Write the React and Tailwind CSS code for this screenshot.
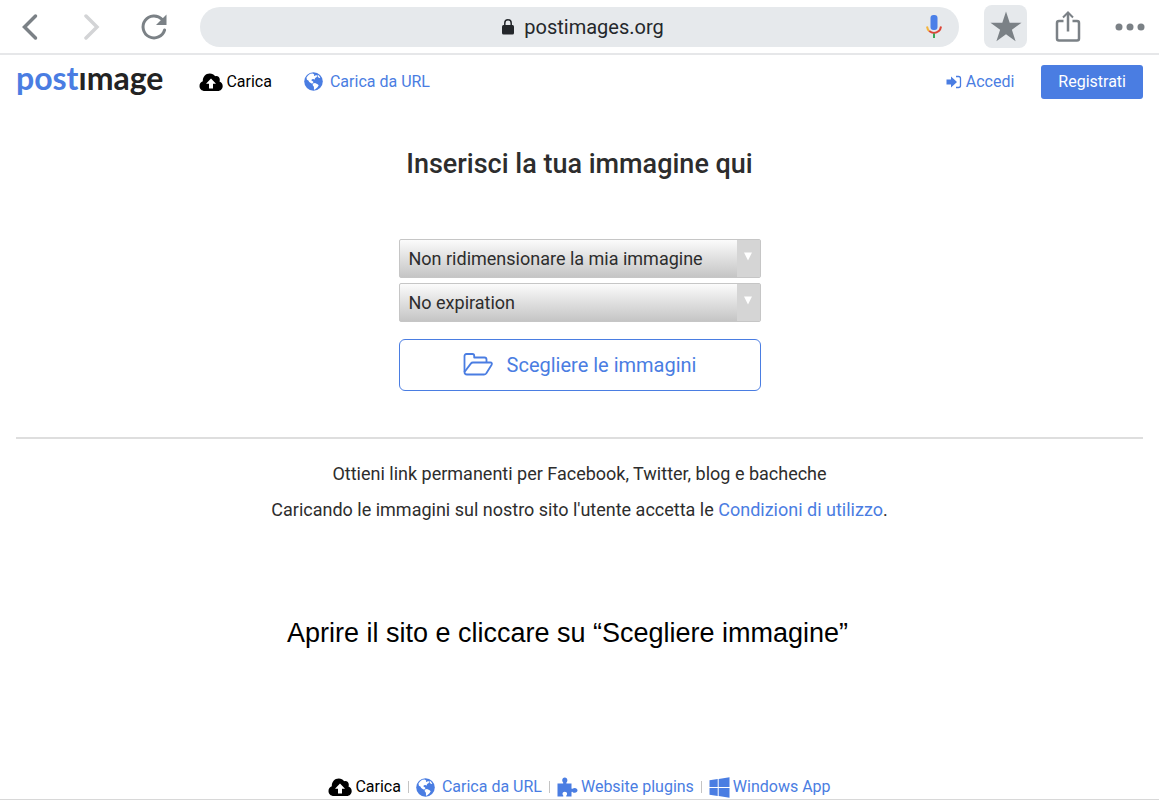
const resizeOptions = ["Non ridimensionare la mia immagine", "320x240", "640x480", "800x600"];
const expirationOptions = ["No expiration", "1 giorno", "7 giorni", "31 giorni"];

function MicIcon() {
  return (
    <svg width="18" height="26" viewBox="0 0 18 26" fill="none">
      <rect x="5.5" y="1" width="7" height="15" rx="3" fill="#4a7fe8" />
      <path d="M2 12.500c.3 2 .9 3.300 2.200 4.600" stroke="#f4b43c" strokeWidth="2" />
      <path d="M4.200 17.100c2.800 2.400 6.800 2.400 9.600 0 1.300-1.300 1.900-2.600 2.200-4.600" stroke="#dc4638" strokeWidth="2" />
      <path d="M9 19.500v4.500" stroke="#3aa757" strokeWidth="2" />
    </svg>
  );
}

function CloudIcon() {
  return (
    <svg width="24" height="18" viewBox="0 0 24 18">
      <path
        d="M6 18C2.500 18 .5 15.800.5 13c0-2.300 1.300-4 3.300-4.700C3.600 4 6.500.5 10.800.5c2.300 0 4.100 1 5.300 2.700 2.500-.7 4.800.9 4.700 3.600 0 .6-.1 1.200-.3 1.700 2 .6 3.200 2.300 3.200 4.500 0 2.800-2 5-4.900 5z"
        fill="currentColor"
      />
      <path d="M12 5.500l5 5.300h-3v4.700h-4v-4.700H7z" fill="#fff" />
    </svg>
  );
}

function GlobeIcon() {
  return (
    <svg width="19" height="19" viewBox="0 0 19 19">
      <circle cx="9.500" cy="9.500" r="9.300" fill="currentColor" />
      <path
        d="M6.200 1.800 4 3.500 2.500 5.500l.4 2.300 1.500.6.800 1.600 2.300 1.500 1.600-.2.200-1.600-1-.8-.8-.2.300-1.500 1.700-.2.900.8.800-1.800 1.600-1.100.3-1.300-1.500-.6-.4 1-1.200-.3.200-1.300-1.500-.8z"
        fill="#fff"
      />
      <path d="M13.600 2.800l1.500 1 1.200 2-1.100.2-1.500-1.300z" fill="#fff" />
      <path d="M9 11.500l2-.5 2.600 1.300 1.100.9-1.200 2.100-2.500 2.200-1 .2-.1-3-1.300-1.600z" fill="#fff" />
    </svg>
  );
}

function PuzzleIcon() {
  return (
    <svg width="21" height="20" viewBox="0 0 21 20" fill="currentColor">
      <path d="M.5 6.500h5.200c.6 0 .7-.5.400-1C5.600 4.800 5.200 4.100 5.200 3.300 5.200 1.700 6.300.5 7.800.5s2.600 1.200 2.600 2.800c0 .8-.4 1.500-.9 2.200-.3.500-.2 1 .4 1h4.600v4.700c0 .7.500.8 1 .5.700-.5 1.400-.8 2.200-.8 1.600 0 2.800 1 2.800 2.400s-1.200 2.500-2.800 2.500c-.8 0-1.500-.4-2.200-.9-.5-.3-1-.2-1 .4v4.200H9.800c-.6 0-.7-.5-.4-1 .4-.5.700-1 .7-1.700 0-1.200-1-2-2.300-2s-2.300.8-2.300 2c0 .7.300 1.200.7 1.700.3.500.2 1-.4 1H.5z" />
    </svg>
  );
}

function WindowsIcon() {
  return (
    <svg width="21" height="21" viewBox="0 0 21 21" fill="currentColor">
      <path d="M.5 3.200 8.700 2v8H.5zM9.700 1.900 20.500.300V10H9.700zM.5 11h8.200v8L.5 17.800zM9.700 11h10.800v9.700L9.700 19.100z" />
    </svg>
  );
}

function BrowserBar() {
  return (
    <div className="flex h-[55px] items-center border-b-2 border-[#e6e7e9] pr-[13px] pl-5 text-[#7b8186]">
      <button aria-label="Indietro" className="flex w-5 justify-center">
        <svg width="16" height="28" viewBox="0 0 16 28" fill="none" stroke="currentColor" strokeWidth="3.500" strokeLinecap="round">
          <path d="M13.500 3 2.500 14l11 11" />
        </svg>
      </button>
      <button aria-label="Avanti" className="ml-10 flex w-6 justify-center text-[#d3d4d6]">
        <svg width="16" height="28" viewBox="0 0 16 28" fill="none" stroke="currentColor" strokeWidth="3.500" strokeLinecap="round">
          <path d="M2 3l11 11L2 25" />
        </svg>
      </button>
      <button aria-label="Ricarica" className="ml-9">
        <svg width="28" height="28" viewBox="0 0 28 28" fill="none">
          <path d="M22 6.300A11 11 0 1 0 24.600 17" stroke="currentColor" strokeWidth="3" strokeLinecap="round" />
          <path d="M26.500 1.500V12H16z" fill="currentColor" />
        </svg>
      </button>
      <div className="ml-8 flex h-10 flex-1 items-center rounded-full bg-[#e6e9ec] pr-4 pl-10">
        <div className="flex flex-1 items-center justify-center gap-[9px] text-[#24272b]">
          <svg width="14" height="18" viewBox="0 0 14 18" fill="none">
            <rect x="1" y="7" width="12" height="9.500" rx="1.500" fill="currentColor" />
            <path d="M3.800 7.500V5a3.200 3.200 0 0 1 6.400 0v2.500" stroke="currentColor" strokeWidth="1.500" />
          </svg>
          <span className="font-[Roboto,sans-serif] text-xl leading-6">postimages.org</span>
        </div>
        <button aria-label="Ricerca vocale">
          <MicIcon />
        </button>
      </div>
      <button aria-label="Preferiti" className="ml-[25px] flex size-[43px] items-center justify-center rounded-lg bg-[#e6e9ec]">
        <svg width="32" height="31" viewBox="0 0 32 31" fill="currentColor">
          <path d="M16 .5l3.700 11.300h11.800l-9.600 7 3.700 11.400L16 23.200l-9.600 7 3.700-11.400-9.600-7h11.800z" />
        </svg>
      </button>
      <button aria-label="Condividi" className="ml-7">
        <svg width="26" height="32" viewBox="0 0 26 32" fill="none" stroke="currentColor" strokeWidth="2.500">
          <path d="M8.500 10H4a2 2 0 0 0-2 2v15.500a2 2 0 0 0 2 2h18a2 2 0 0 0 2-2V12a2 2 0 0 0-2-2h-4.500M13 20.500V2" />
          <path d="M8 6.500l5-5 5 5" strokeWidth="2" />
        </svg>
      </button>
      <button aria-label="Altro" className="ml-[33px]">
        <svg width="32" height="8" viewBox="0 0 32 8" fill="currentColor">
          <circle cx="5" cy="4" r="3.500" />
          <circle cx="16" cy="4" r="3.500" />
          <circle cx="27" cy="4" r="3.500" />
        </svg>
      </button>
    </div>
  );
}

function SiteHeader() {
  return (
    <header className="flex h-[53px] items-center px-4 text-base">
      <a
        href="#home"
        aria-label="postimage"
        className="pb-2 font-[Lato,sans-serif] text-[32px] leading-8 font-bold text-[#232323] [font-variant-ligatures:none]"
      >
        <span className="text-[#4a7de2]">post</span>ımage
      </a>
      <nav className="ml-9 flex flex-1 items-center gap-8">
        <a href="#upload" className="flex items-center gap-[3px] text-black">
          <CloudIcon />
          Carica
        </a>
        <a href="#url" className="flex items-center gap-[7px]">
          <GlobeIcon />
          Carica da URL
        </a>
      </nav>
      <a href="#login" className="flex items-center gap-1">
        <svg width="16" height="14" viewBox="0 0 16 14" fill="none">
          <path d="M.5 4.500H5V1.500L11 7l-6 5.500v-3H.5z" fill="currentColor" />
          <path d="M10 1.500h2.500a2 2 0 0 1 2 2v7a2 2 0 0 1-2 2H10" stroke="currentColor" strokeWidth="1.300" />
        </svg>
        Accedi
      </a>
      <a href="#signup" className="ml-[27px] rounded-[3px] bg-[#4a7de2] px-[17px] py-[5px] leading-6 text-white">
        Registrati
      </a>
    </header>
  );
}

function GradientSelect({ label, options }) {
  return (
    <div className="relative">
      <select
        aria-label={label}
        className="block h-[39px] w-full appearance-none rounded-xs border border-[#c6c6c6] bg-linear-to-b from-[#fbfbfb] to-[#c5c5c5] pr-8 pl-[9px] text-lg leading-6 text-[#2d2d2d]"
      >
        {options.map((option) => (
          <option key={option}>{option}</option>
        ))}
      </select>
      <div className="pointer-events-none absolute inset-y-px right-px flex w-[23px] justify-center bg-[#d5d5d5] pt-3">
        <svg width="10" height="9" viewBox="0 0 10 9" fill="#fff">
          <path d="M1 .5h8L5 8.500z" />
        </svg>
      </div>
    </div>
  );
}

function UploadForm() {
  return (
    <div className="mx-auto flex w-[362px] flex-col gap-[5px]">
      <GradientSelect label="Dimensione immagine" options={resizeOptions} />
      <GradientSelect label="Scadenza" options={expirationOptions} />
      <button className="mt-3 flex h-[52px] items-center justify-center gap-[14px] rounded-md border border-[#4a7de2] text-xl text-[#4a7de2]">
        <svg width="30" height="24" viewBox="0 0 30 24" fill="none" stroke="currentColor" strokeWidth="1.800" strokeLinejoin="round">
          <path d="M1.500 19V3c0-1.300.7-2 2-2h6c1 0 1.700.7 1.700 1.700v1.800h10.300c1.300 0 2 .7 2 2v3" />
          <path d="M1.500 19c0 1.800.7 2.500 2.500 2.500h17c1 0 1.600-.3 2.200-1l5.300-8.500c.8-1.500.3-2.500-1.200-2.500H10c-1 0-1.600.3-2.200 1.100L1.500 19z" />
        </svg>
        Scegliere le immagini
      </button>
    </div>
  );
}

function Footer() {
  return (
    <footer className="flex items-center justify-center border-b border-[#d8d8d8] text-base leading-6">
      <a href="#upload" className="flex items-center gap-[3px] text-black">
        <CloudIcon />
        Carica
      </a>
      <span className="mx-[7px] h-3 w-px bg-[#c4c4c4]" />
      <a href="#url" className="flex items-center gap-[7px]">
        <GlobeIcon />
        Carica da URL
      </a>
      <span className="mx-[7px] h-3 w-px bg-[#c4c4c4]" />
      <a href="#plugins" className="flex items-center gap-[3px]">
        <PuzzleIcon />
        Website plugins
      </a>
      <span className="mx-[7px] h-3 w-px bg-[#c4c4c4]" />
      <a href="#app" className="flex items-center gap-[3px]">
        <WindowsIcon />
        Windows App
      </a>
    </footer>
  );
}

export default function App() {
  return (
    <div className="flex min-h-screen flex-col bg-white font-[Roboto,sans-serif] text-[#4a7de2]">
      <BrowserBar />
      <SiteHeader />
      <main className="flex-1 px-4 text-center text-lg text-[#2d2d2d]">
        <h1 className="mt-10 mb-[59px] text-[27px] leading-8 font-medium">Inserisci la tua immagine qui</h1>
        <UploadForm />
        <hr className="mt-[46px] border-t-2 border-[#dedede]" />
        <p className="mt-[23px] leading-6">Ottieni link permanenti per Facebook, Twitter, blog e bacheche</p>
        <p className="mt-3 leading-6">
          Caricando le immagini sul nostro sito l'utente accetta le{" "}
          <a href="#terms" className="text-[#4a7de2]">Condizioni di utilizzo</a>.
        </p>
        <p className="mt-[95px] mr-6 font-['Liberation_Sans',sans-serif] text-[27px] leading-8 text-black">
          Aprire il sito e cliccare su “Scegliere immagine”
        </p>
      </main>
      <Footer />
    </div>
  );
}
